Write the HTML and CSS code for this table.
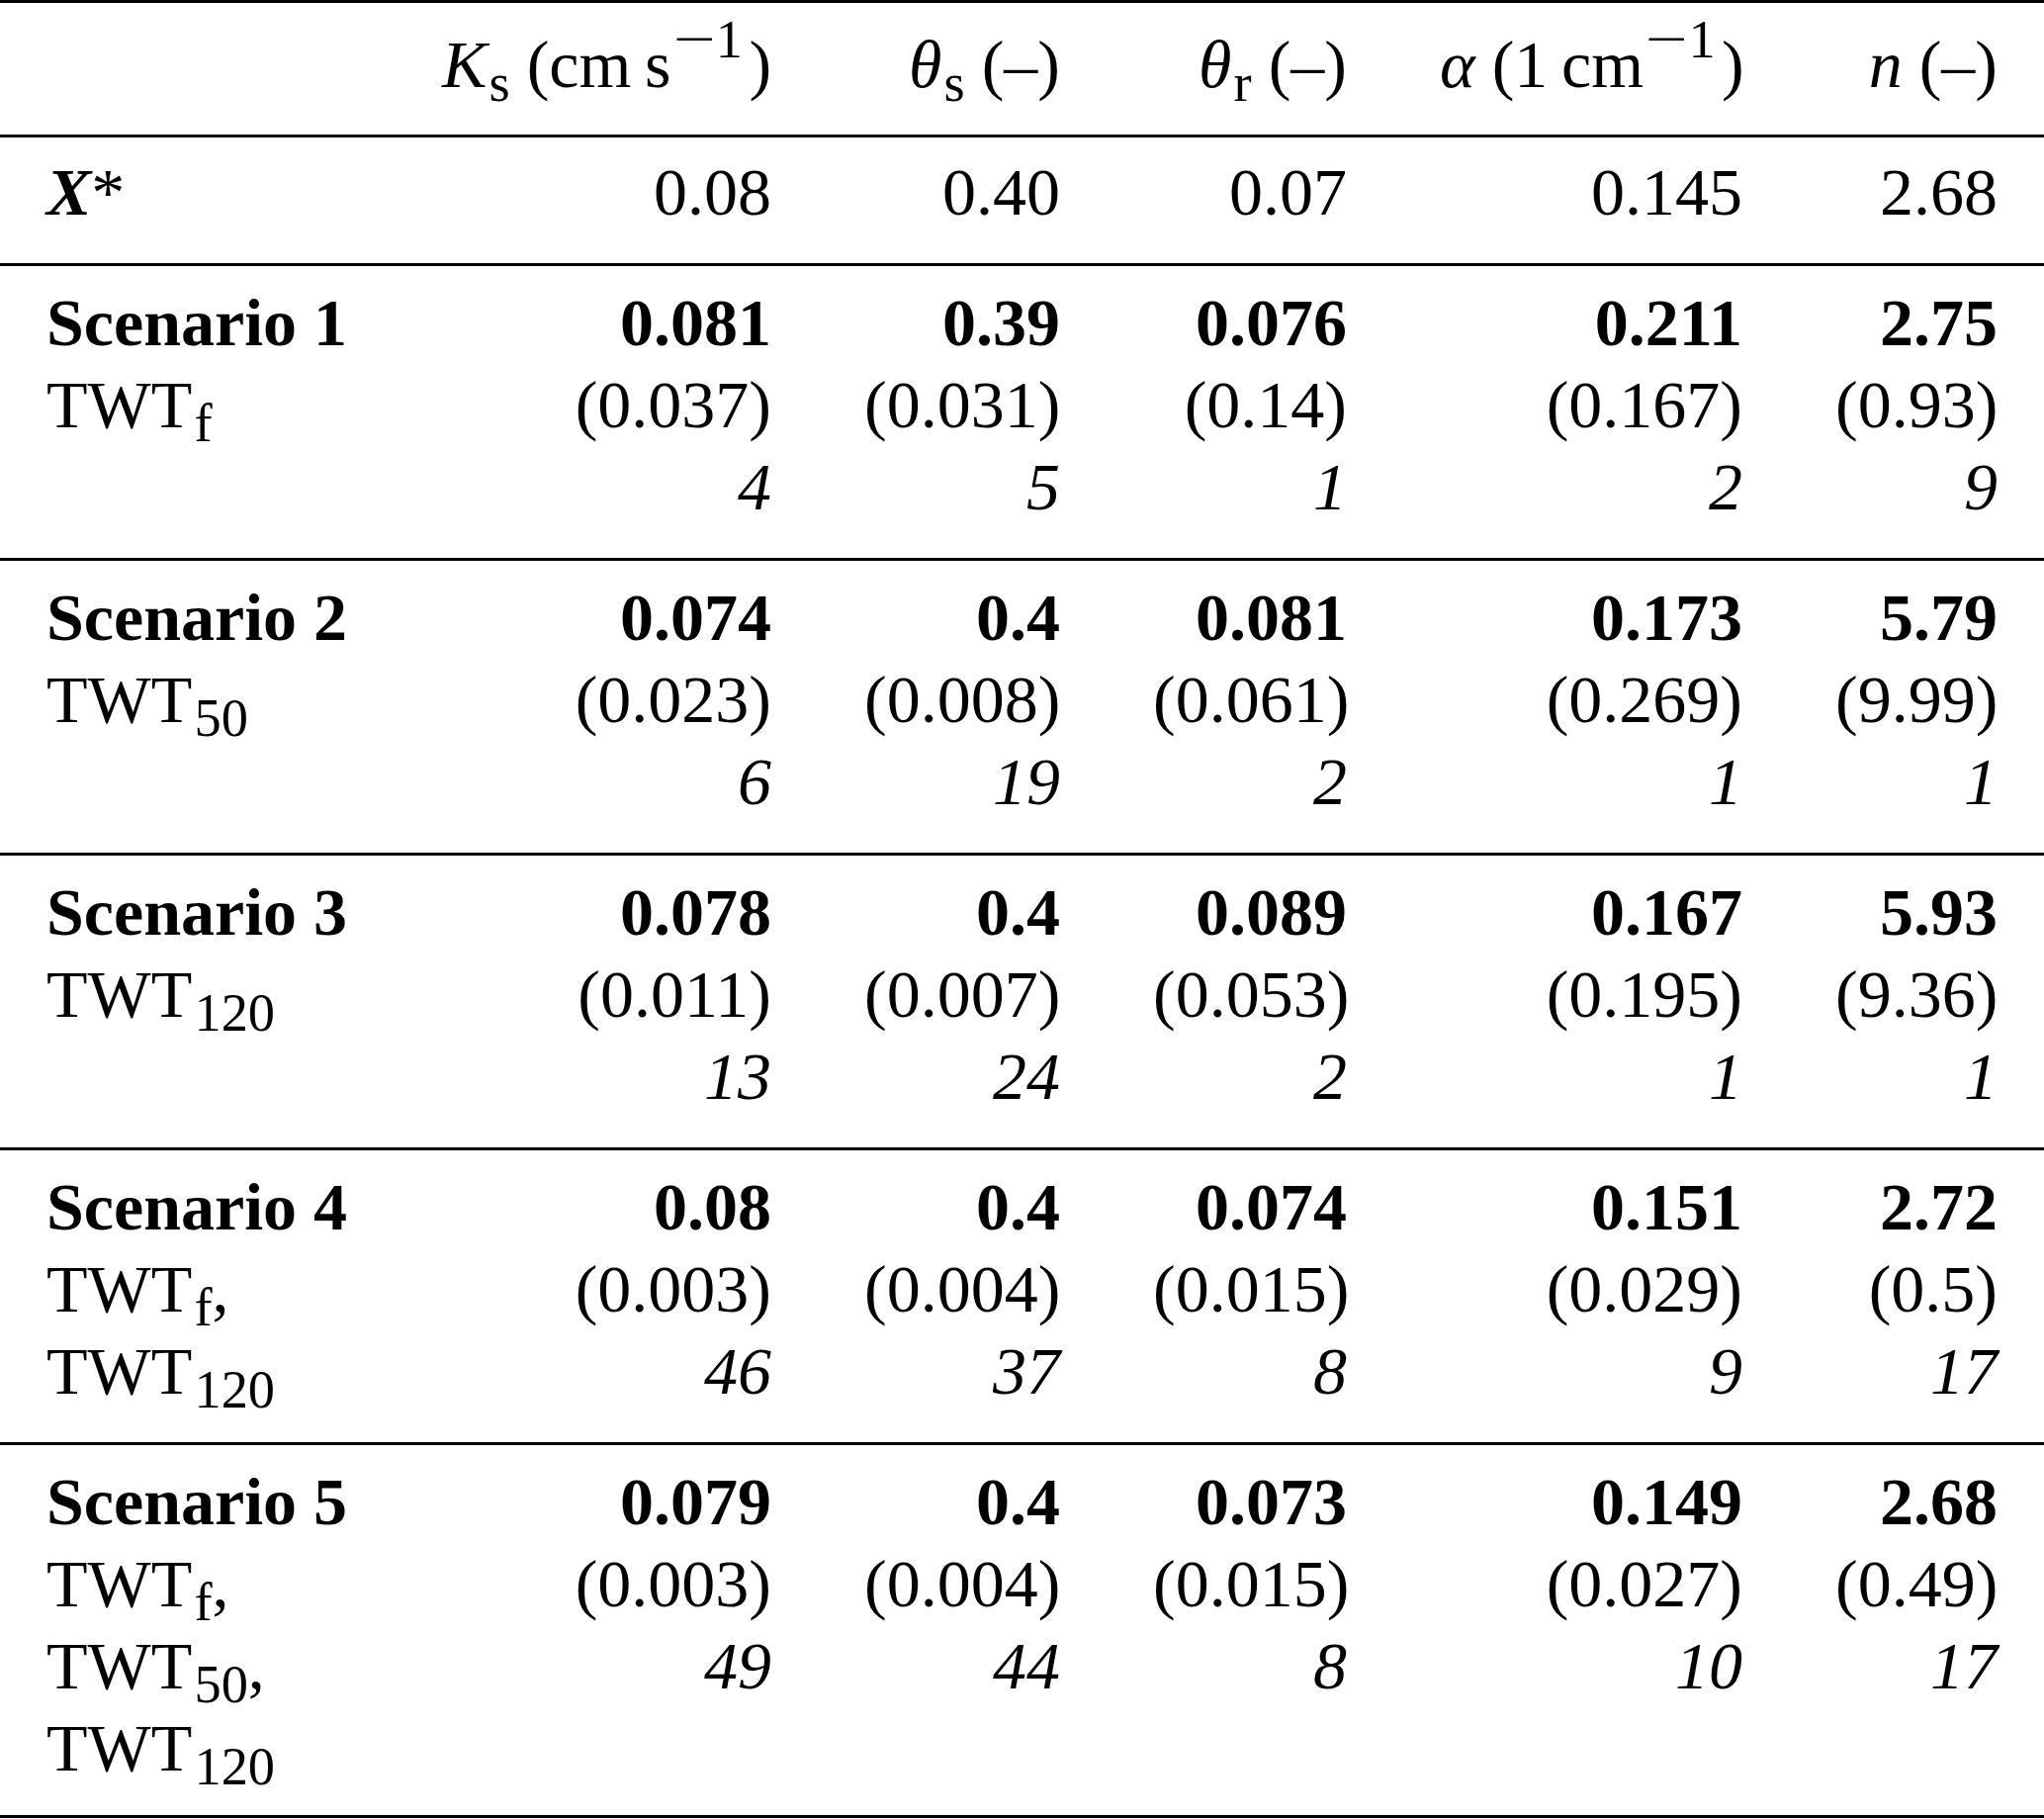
FILE: index.html
```html
<!DOCTYPE html>
<html>
<head>
<meta charset="utf-8">
<link rel="stylesheet" href="styles.css">
</head>
<body>
<table class="tbl">
  <colgroup>
    <col class="c1"><col class="c2"><col class="c3"><col class="c4"><col class="c5"><col class="c6">
  </colgroup>
  <thead>
    <tr class="head">
      <th></th>
      <th><i>K</i><sub>s</sub> (cm&#8201;s<sup><span class="mn">−</span>1</sup>)</th>
      <th><i>θ</i><sub>s</sub> (–)</th>
      <th><i>θ</i><sub>r</sub> (–)</th>
      <th><i>α</i> (1&#8201;cm<sup><span class="mn">−</span>1</sup>)</th>
      <th><i>n</i> (–)</th>
    </tr>
  </thead>
  <tbody>
    <tr class="xrow">
      <td><b><i>X</i></b>*</td>
      <td>0.08</td><td>0.40</td><td>0.07</td><td>0.145</td><td>2.68</td>
    </tr>
    <tr class="sc">
      <td><b>Scenario 1</b><br>TWT<sub>f</sub></td>
      <td><b>0.081</b><br>(0.037)<br><i>4</i></td>
      <td><b>0.39</b><br>(0.031)<br><i>5</i></td>
      <td><b>0.076</b><br>(0.14)<br><i>1</i></td>
      <td><b>0.211</b><br>(0.167)<br><i>2</i></td>
      <td><b>2.75</b><br>(0.93)<br><i>9</i></td>
    </tr>
    <tr class="sc">
      <td><b>Scenario 2</b><br>TWT<sub>50</sub></td>
      <td><b>0.074</b><br>(0.023)<br><i>6</i></td>
      <td><b>0.4</b><br>(0.008)<br><i>19</i></td>
      <td><b>0.081</b><br>(0.061)<br><i>2</i></td>
      <td><b>0.173</b><br>(0.269)<br><i>1</i></td>
      <td><b>5.79</b><br>(9.99)<br><i>1</i></td>
    </tr>
    <tr class="sc">
      <td><b>Scenario 3</b><br>TWT<sub>120</sub></td>
      <td><b>0.078</b><br>(0.011)<br><i>13</i></td>
      <td><b>0.4</b><br>(0.007)<br><i>24</i></td>
      <td><b>0.089</b><br>(0.053)<br><i>2</i></td>
      <td><b>0.167</b><br>(0.195)<br><i>1</i></td>
      <td><b>5.93</b><br>(9.36)<br><i>1</i></td>
    </tr>
    <tr class="sc">
      <td><b>Scenario 4</b><br>TWT<sub>f</sub>,<br>TWT<sub>120</sub></td>
      <td><b>0.08</b><br>(0.003)<br><i>46</i></td>
      <td><b>0.4</b><br>(0.004)<br><i>37</i></td>
      <td><b>0.074</b><br>(0.015)<br><i>8</i></td>
      <td><b>0.151</b><br>(0.029)<br><i>9</i></td>
      <td><b>2.72</b><br>(0.5)<br><i>17</i></td>
    </tr>
    <tr class="sc last">
      <td><b>Scenario 5</b><br>TWT<sub>f</sub>,<br>TWT<sub>50</sub>,<br>TWT<sub>120</sub></td>
      <td><b>0.079</b><br>(0.003)<br><i>49</i></td>
      <td><b>0.4</b><br>(0.004)<br><i>44</i></td>
      <td><b>0.073</b><br>(0.015)<br><i>8</i></td>
      <td><b>0.149</b><br>(0.027)<br><i>10</i></td>
      <td><b>2.68</b><br>(0.49)<br><i>17</i></td>
    </tr>
  </tbody>
</table>
</body>
</html>
```

FILE: styles.css
```css
html, body {
  margin: 0;
  padding: 0;
  background: #ffffff;
}

.tbl {
  width: 2067px;
  table-layout: fixed;
  border-collapse: collapse;
  font-family: "Liberation Serif", "Times New Roman", serif;
  font-size: 68px;
  line-height: 83px;
  color: #000;
  border-top: 3px solid #000;
  border-bottom: 3px solid #000;
}

.c1 { width: 400px; }
.c2 { width: 427px; }
.c3 { width: 292px; }
.c4 { width: 290px; }
.c5 { width: 400px; }
.c6 { width: 258px; }

.tbl th,
.tbl td {
  padding: 0 47px;
  text-align: right;
  vertical-align: top;
  white-space: nowrap;
  font-weight: normal;
}

.tbl th:first-child,
.tbl td:first-child {
  text-align: left;
}

.head th {
  padding-top: 21px;
  padding-bottom: 29px;
}

.xrow td {
  border-top: 3px solid #000;
  padding-top: 14px;
  padding-bottom: 30px;
}

.sc td {
  border-top: 3px solid #000;
  padding-top: 16px;
  padding-bottom: 30px;
}

.sc.last td {
  padding-bottom: 26px;
}

sub, sup {
  font-size: 0.8em;
  line-height: 0;
}

sub {
  vertical-align: -0.26em;
  margin-left: 0.04em;
}

sup {
  vertical-align: 0.55em;
  margin-left: 0.03em;
  margin-right: 0.12em;
}

.mn {
  display: inline-block;
  transform: scaleX(1.4);
  margin: 0 0.12em;
}

b {
  font-weight: bold;
}
```
